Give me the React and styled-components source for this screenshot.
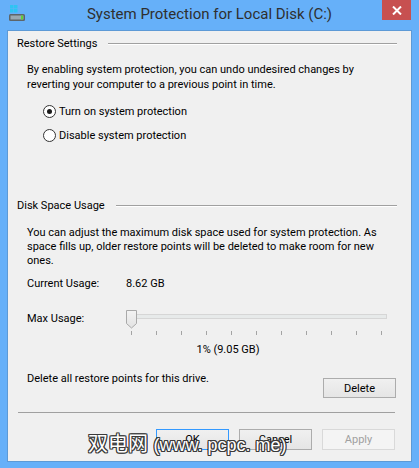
import React from 'react';
import styled, { createGlobalStyle } from 'styled-components';

const GlobalStyle = createGlobalStyle`
  html, body {
    margin: 0;
    padding: 0;
    background: #66b0f9;
  }
  body {
    font-family: Roboto, "Noto Sans", sans-serif;
    font-size: 11px;
    color: #000;
  }
`;

const Window = styled.div`
  position: relative;
  width: 419px;
  height: 468px;
  background: #66b0f9;
  display: flex;
  flex-direction: column;
  overflow: hidden;
`;

const TitleBar = styled.div`
  height: 30px;
  display: grid;
  grid-template-columns: 1fr auto 1fr;
  align-items: start;
`;

const AppIcon = styled.div`
  padding: 5px 0 0 9px;
  line-height: 0;
`;

const Title = styled.div`
  font-size: 15px;
  line-height: 28px;
  color: #2f2f2f;
  white-space: nowrap;
`;

const CloseButton = styled.div`
  justify-self: end;
  margin-right: 8px;
  width: 29px;
  height: 20px;
  background: #c75050;
  display: flex;
  align-items: center;
  justify-content: center;
`;

const Client = styled.div`
  flex: 1;
  margin: 0 7px 6px;
  background: #f0f0f0;
  border: 1px solid #5d9ad6;
  padding: 5px 14px 0 9px;
  display: flex;
  flex-direction: column;
  white-space: nowrap;
`;

const GroupHeader = styled.div`
  display: flex;
  align-items: center;
  gap: 11px;
  line-height: 15px;
  margin-top: ${(p) => p.$top || 0}px;
`;

const GroupLine = styled.div`
  flex: 1;
  height: 1px;
  background: #a0a0a0;
  border-bottom: 1px solid #fff;
`;

const Text = styled.p`
  margin: ${(p) => p.$top || 0}px 0 0 10px;
  line-height: ${(p) => p.$lh || 15}px;
`;

const RadioList = styled.div`
  margin: 11px 0 0 26px;
  display: flex;
  flex-direction: column;
  gap: 8px;
`;

const RadioRow = styled.label`
  display: flex;
  align-items: center;
  gap: 3px;
  height: 16px;
`;

const RadioCircle = styled.span`
  box-sizing: border-box;
  width: 13px;
  height: 13px;
  border-radius: 50%;
  border: 1px solid #333;
  background: #fff;
  display: flex;
  align-items: center;
  justify-content: center;

  &::after {
    content: '';
    width: 5px;
    height: 5px;
    border-radius: 50%;
    background: ${(p) => (p.$checked ? '#1a1a1a' : 'transparent')};
  }
`;

const InfoRow = styled.div`
  display: flex;
  align-items: flex-start;
  margin: ${(p) => p.$top || 0}px 0 0 10px;
  line-height: 15px;
`;

const InfoLabel = styled.div`
  width: 99px;
  flex: none;
  margin-top: ${(p) => p.$top || 0}px;
`;

const Slider = styled.div`
  position: relative;
  width: 261px;
  height: 29px;
`;

const Track = styled.div`
  position: absolute;
  left: 5px;
  right: 0;
  top: 8px;
  height: 3px;
  background: #e7eaea;
  border: 1px solid #d6d6d6;
`;

const Ticks = styled.div`
  position: absolute;
  left: 5px;
  width: 251px;
  top: 25px;
  height: 4px;
  display: flex;
  justify-content: space-between;
`;

const Tick = styled.span`
  width: 1px;
  height: 4px;
  background: #a4a4a4;
`;

const Thumb = styled.svg`
  position: absolute;
  left: 0;
  top: 4px;
`;

const Percent = styled.div`
  margin: 7px 0 0 141px;
  width: 140px;
  text-align: center;
  line-height: 15px;
`;

const DeleteRow = styled.div`
  display: flex;
  justify-content: space-between;
  align-items: flex-start;
  margin: 14px 1px 0 10px;
  line-height: 15px;
`;

const Button = styled.button`
  box-sizing: border-box;
  width: 73px;
  height: ${(p) => p.$h || 21}px;
  margin-top: ${(p) => p.$top || 0}px;
  padding: 0;
  font-family: inherit;
  font-size: 11px;
  color: ${(p) => (p.disabled ? '#a0a0a0' : '#000')};
  border: 1px solid ${(p) => (p.$default ? '#3399ff' : p.disabled ? '#d9d9d9' : '#acacac')};
  background: ${(p) =>
    p.disabled ? '#f4f4f4' : 'linear-gradient(#f0f0f0, #e5e5e5)'};
`;

const Separator = styled.div`
  height: 1px;
  background: #a0a0a0;
  margin: 14px 2px 0 1px;
`;

const Footer = styled.div`
  display: flex;
  justify-content: flex-end;
  gap: 10px;
  margin: 16px 2px 0 0;
`;

const Watermark = styled.div`
  position: absolute;
  left: 88px;
  top: 430px;
  font-family: "Liberation Sans", "Noto Sans CJK SC", sans-serif;
  font-size: 20px;
  line-height: 28px;
  color: #fff;
  white-space: nowrap;
  text-shadow: 1px 1px 0 #3a3a3a, -1px -1px 0 #3a3a3a, 1px -1px 0 #3a3a3a,
    -1px 1px 0 #3a3a3a, 1px 0 0 #3a3a3a, 0 1px 0 #3a3a3a, -1px 0 0 #3a3a3a,
    0 -1px 0 #3a3a3a;
`;

const WatermarkLatin = styled.span`
  font-size: 18px;
`;

const DriveIcon = () => (
  <svg width="17" height="16" viewBox="0 0 17 16">
    <rect x="1" y="0" width="3.5" height="3.5" fill="#2ec4f3" />
    <rect x="5" y="0" width="3.5" height="3.5" fill="#2ec4f3" />
    <rect x="1" y="4" width="3.5" height="3.5" fill="#2ec4f3" />
    <rect x="5" y="4" width="3.5" height="3.5" fill="#2ec4f3" />
    <rect x="0" y="9" width="16" height="7" rx="1.5" fill="#5d6569" />
    <rect x="1.5" y="10.5" width="13" height="4" fill="#9aa8b0" />
    <rect x="12" y="10.5" width="2" height="4" fill="#5ed23a" />
  </svg>
);

const CloseIcon = () => (
  <svg width="10" height="9" viewBox="0 0 10 9">
    <path d="M1 0.5 L9 8.5 M9 0.5 L1 8.5" stroke="#fff" strokeWidth="2" />
  </svg>
);

const ticks = Array.from({ length: 11 });

export default function App() {
  return (
    <>
      <GlobalStyle />
      <Window>
        <TitleBar>
          <AppIcon>
            <DriveIcon />
          </AppIcon>
          <Title>System Protection for Local Disk (C:)</Title>
          <CloseButton>
            <CloseIcon />
          </CloseButton>
        </TitleBar>

        <Client>
          <GroupHeader>
            Restore Settings
            <GroupLine />
          </GroupHeader>
          <Text $top={11}>
            By enabling system protection, you can undo undesired changes by
            <br />
            reverting your computer to a previous point in time.
          </Text>
          <RadioList>
            <RadioRow>
              <RadioCircle $checked />
              Turn on system protection
            </RadioRow>
            <RadioRow>
              <RadioCircle />
              Disable system protection
            </RadioRow>
          </RadioList>

          <GroupHeader $top={55}>
            Disk Space Usage
            <GroupLine />
          </GroupHeader>
          <Text $top={13} $lh={14}>
            You can adjust the maximum disk space used for system protection. As
            <br />
            space fills up, older restore points will be deleted to make room for new
            <br />
            ones.
          </Text>
          <InfoRow $top={8}>
            <InfoLabel>Current Usage:</InfoLabel>
            8.62 GB
          </InfoRow>
          <InfoRow $top={15}>
            <InfoLabel $top={5}>Max Usage:</InfoLabel>
            <Slider>
              <Track />
              <Ticks>
                {ticks.map((_, i) => (
                  <Tick key={i} />
                ))}
              </Ticks>
              <Thumb width="11" height="19" viewBox="0 0 11 19">
                <defs>
                  <linearGradient id="thumbFill" x1="0" y1="0" x2="0" y2="1">
                    <stop offset="0" stopColor="#f3f3f3" />
                    <stop offset="1" stopColor="#e2e2e2" />
                  </linearGradient>
                </defs>
                <path
                  d="M0.5 0.5 H10.5 V13.5 L5.5 18 L0.5 13.5 Z"
                  fill="url(#thumbFill)"
                  stroke="#a9a9a9"
                />
              </Thumb>
            </Slider>
          </InfoRow>
          <Percent>1% (9.05 GB)</Percent>
          <DeleteRow>
            Delete all restore points for this drive.
            <Button $h={20} $top={7}>Delete</Button>
          </DeleteRow>

          <Separator />
          <Footer>
            <Button $default>OK</Button>
            <Button>Cancel</Button>
            <Button disabled>Apply</Button>
          </Footer>
        </Client>

        <Watermark>
          双电网 <WatermarkLatin>(www. pcpc. me)</WatermarkLatin>
        </Watermark>
      </Window>
    </>
  );
}
